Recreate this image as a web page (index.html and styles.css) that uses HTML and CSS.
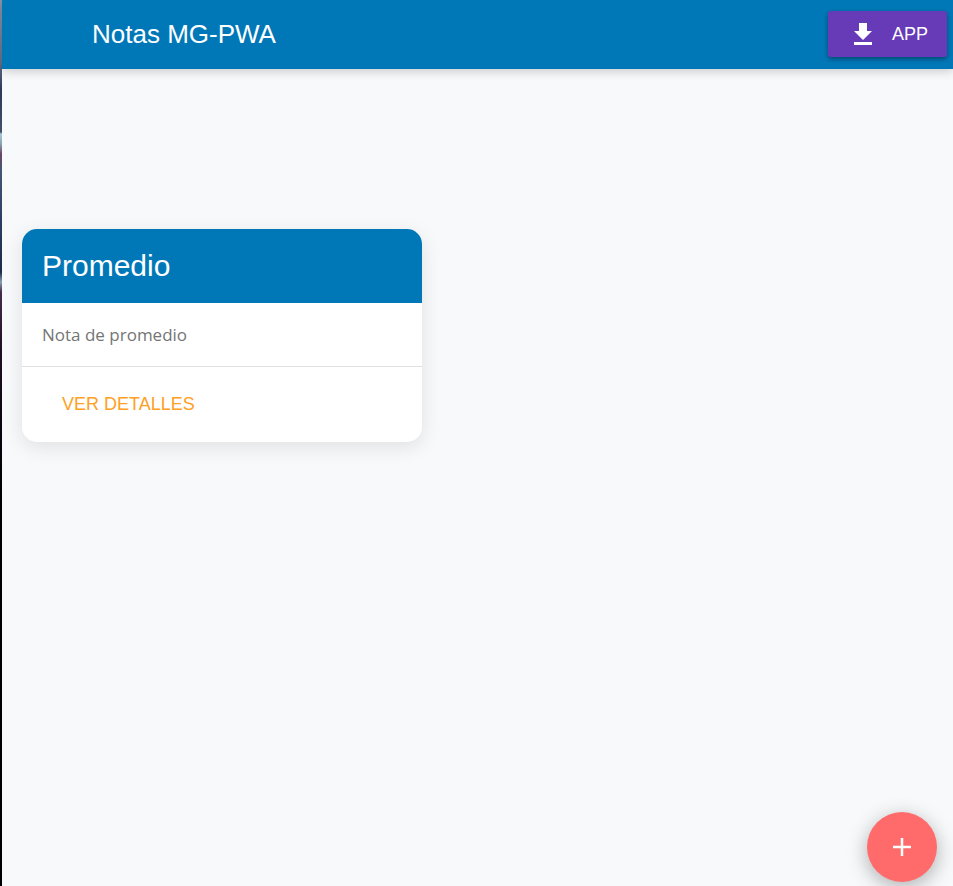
FILE: index.html
```html
<!DOCTYPE html>
<html lang="es">
<head>
  <meta charset="utf-8">
  <meta name="viewport" content="width=device-width, initial-scale=1">
  <title>Notas MG-PWA</title>
  <link rel="stylesheet" href="styles.css">
</head>
<body>
  <header class="toolbar">
    <h1 class="toolbar-title">Notas MG-PWA</h1>
    <button class="install" type="button">
      <svg class="icon" viewBox="0 0 24 24" aria-hidden="true"><path d="M19.2 9.6h-4V3.2H8.8v6.4h-4l7.2 7.2zM4.8 18.4v2.4h14.4v-2.4z"/></svg>
      <span>APP</span>
    </button>
  </header>
  <main class="content">
    <article class="card">
      <h2 class="card-title">Promedio</h2>
      <p class="card-text">Nota de promedio</p>
      <div class="card-actions">
        <a class="card-link" href="#detalles">VER DETALLES</a>
      </div>
    </article>
  </main>
  <button class="fab" type="button" aria-label="+">
    <svg class="icon" viewBox="0 0 24 24" aria-hidden="true"><path d="M19.2 13h-6.2v6.2h-2V13H4.8v-2h6.2V4.8h2V11h6.2z"/></svg>
  </button>
</body>
</html>
```

FILE: styles.css
```css
* {
  box-sizing: border-box;
}

body {
  margin: 0;
  padding-left: 2px;
  min-height: 100vh;
  font-family: "Liberation Sans", Arial, sans-serif;
  color: #fff;
  background:
    linear-gradient(#8a96aa 0, #66748c 60px, #30385a 90px, #454e6b 132px, #a9c9d6 134px, #86a0b4 144px, #6b4565 154px, #455576 170px, #2e3e62 220px, #1e2a4a 272px, #8a9fb5 282px, #452c4c 292px, #200f24 350px, #0a0610 430px, #000 500px) left top / 2px 100% no-repeat,
    #f8f9fb;
}

h1,
h2,
p {
  margin: 0;
  font-weight: 400;
}

button {
  border: 0;
  color: inherit;
  font: inherit;
  cursor: pointer;
}

.icon {
  display: block;
  width: 30px;
  height: 30px;
  fill: currentColor;
}

.toolbar {
  display: flex;
  align-items: center;
  justify-content: space-between;
  padding: 11px 6px 12px 90px;
  background: #0078b8;
  box-shadow: 0 2px 10px rgba(0, 0, 0, 0.2);
}

.toolbar-title {
  font-size: 26px;
  line-height: 46px;
}

.install {
  display: flex;
  align-items: center;
  gap: 14px;
  padding: 8px 19px 8px 20px;
  border-radius: 3px;
  background: #673ab7;
  box-shadow: 0 2px 5px rgba(0, 0, 0, 0.4);
  font-size: 18px;
  line-height: 30px;
}

.content {
  padding: 160px 20px 20px;
}

.card {
  max-width: 400px;
  overflow: hidden;
  border-radius: 15px;
  background: #fff;
  box-shadow: 0 5px 20px rgba(0, 0, 0, 0.1);
}

.card-title {
  padding: 20px;
  background: #0078b8;
  font-size: 30px;
  line-height: 34px;
}

.card-text {
  padding: 20px;
  color: #757575;
  font-family: "Segoe UI", "Open Sans", sans-serif;
  font-size: 17px;
  line-height: 23px;
}

.card-actions {
  padding: 10px;
  border-top: 1px solid #e0e0e0;
}

.card-link {
  display: inline-block;
  padding: 15px 30px;
  color: #ffa026;
  font-size: 18px;
  line-height: 25px;
  text-decoration: none;
  vertical-align: top;
}

.fab {
  position: fixed;
  right: 16px;
  bottom: 4px;
  display: grid;
  place-items: center;
  width: 70px;
  height: 70px;
  padding: 0;
  border-radius: 50%;
  background: #ff6b6b;
  box-shadow: 0 5px 20px rgba(0, 0, 0, 0.3);
}
```
